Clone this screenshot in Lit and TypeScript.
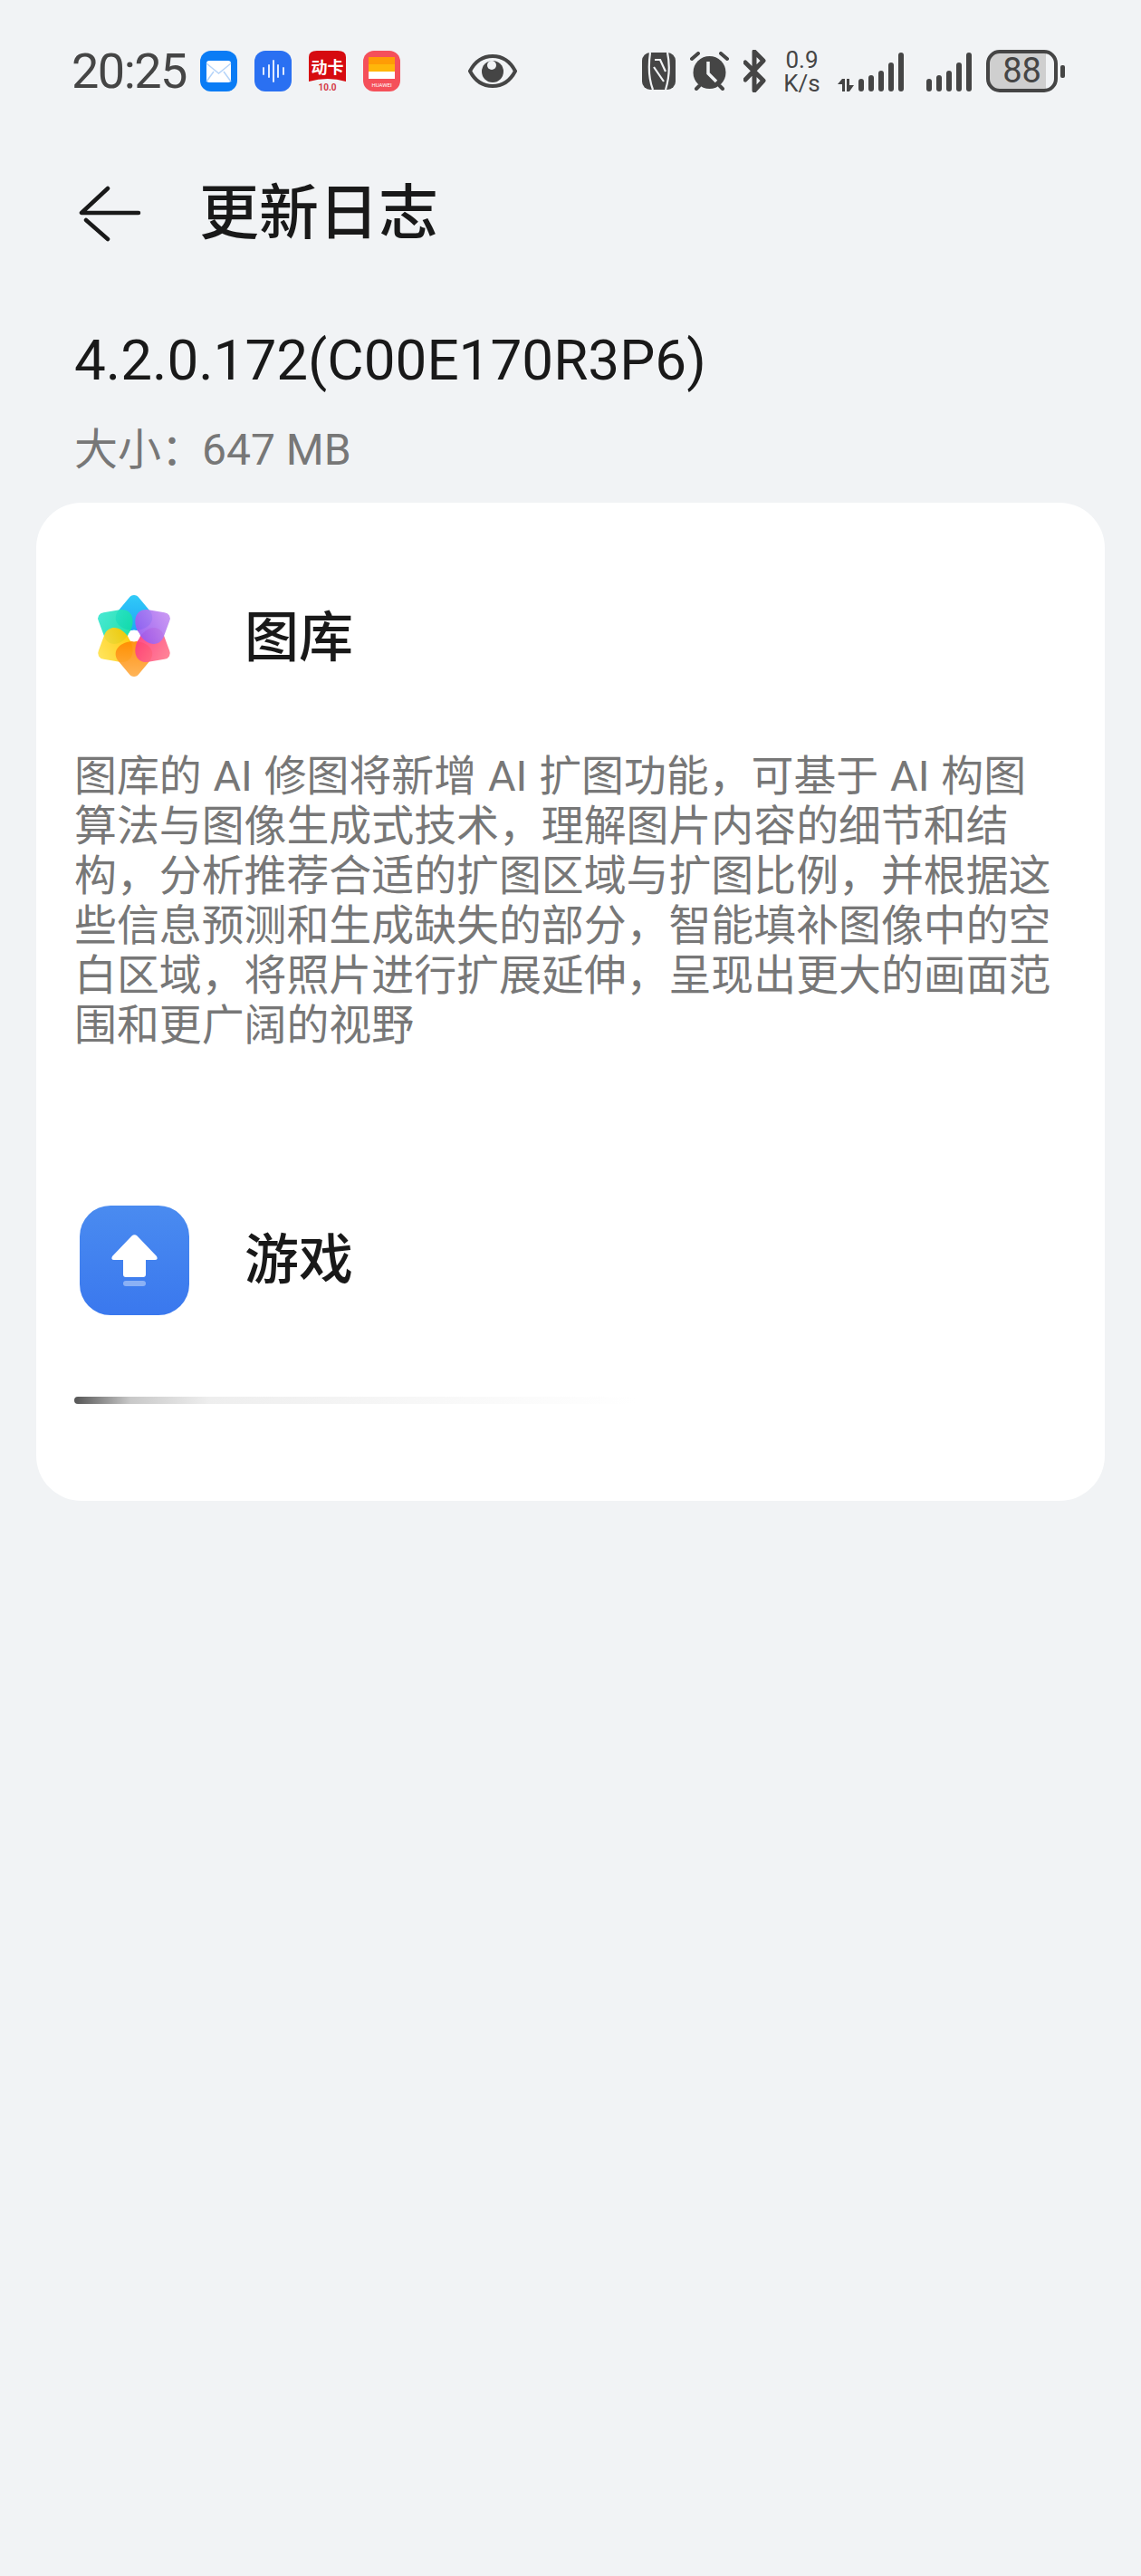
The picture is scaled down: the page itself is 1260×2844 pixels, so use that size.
import { LitElement, css, html, svg } from "lit";
import { customElement } from "lit/decorators.js";

const petal =
  "M0-45Q3.500-45 5.500-42L18-27C25-16 15-6 0-6C-15-6-25-16-18-27L-5.500-42Q-3.500-45 0-45Z";

// drawn so that each petal lies over the one clockwise from it
const petals = [
  { angle: 0, id: "p-blue", a: "#1fc6f7", b: "#0a9ff5" },
  { angle: 300, id: "p-teal", a: "#38e6cf", b: "#12dfa4" },
  { angle: 240, id: "p-yellow", a: "#ffe24f", b: "#ffc800" },
  { angle: 180, id: "p-orange", a: "#ffae4a", b: "#ff8a00" },
  { angle: 120, id: "p-pink", a: "#ff7a8e", b: "#ff3f80" },
  { angle: 60, id: "p-purple", a: "#c590f2", b: "#9a5cf0" },
];

const signal = [14, 18, 23, 32, 43];

@customElement("app-root")
export class AppRoot extends LitElement {
  static styles = css`
    :host {
      display: block;
      height: 2844px;
      background: #f1f3f5;
      font-family: "Roboto", "Noto Sans CJK SC", sans-serif;
      color: #191919;
      overflow: hidden;
    }

    svg {
      display: block;
      flex: none;
    }

    .status {
      display: flex;
      align-items: center;
      height: 45px;
      padding: 56px 84px 0 79px;
      color: #454545;
    }

    .time {
      font-size: 54px;
      letter-spacing: -1.500px;
      line-height: 45px;
      width: 142px;
      flex: none;
    }

    .notif {
      width: 41px;
      height: 45px;
      margin-right: 19px;
      flex: none;
    }

    .eye {
      margin-left: 56px;
    }

    .right {
      margin-left: auto;
      display: flex;
      align-items: center;
    }

    .gap-16 {
      margin-left: 16px;
    }

    .speed {
      font-size: 26px;
      line-height: 26px;
      text-align: center;
      width: 41px;
      margin: 0 19px;
    }

    .signal-2 {
      margin-left: 24px;
    }

    .battery {
      width: 79px;
      height: 47px;
      box-sizing: border-box;
      border: 4px solid #454545;
      border-radius: 15px;
      margin-left: 16px;
      background: linear-gradient(90deg, #cfcfcf 88%, transparent 88%);
      font-size: 38px;
      line-height: 39px;
      text-align: center;
    }

    .nub {
      width: 5px;
      height: 14px;
      margin-left: 3px;
      border-radius: 2px;
      background: #454545;
    }

    .toolbar {
      display: flex;
      align-items: center;
      height: 100px;
      margin-top: 85px;
      padding-left: 87px;
      gap: 64px;
    }

    .title {
      font-size: 66px;
      font-weight: 500;
      line-height: 100px;
    }

    .head {
      padding: 0 82px;
      margin-top: 72px;
    }

    .version {
      font-size: 62px;
      line-height: 80px;
    }

    .size {
      font-size: 48px;
      line-height: 60px;
      margin-top: 29px;
      color: #777;
    }

    .colon {
      margin-right: -3px;
    }

    .card {
      margin: 28px 40px 0;
      height: 1102px;
      box-sizing: border-box;
      padding: 0 42px;
      background: #fff;
      border-radius: 50px;
    }

    .app {
      display: flex;
      align-items: center;
    }

    .app-name {
      font-size: 60px;
      font-weight: 500;
      line-height: 80px;
    }

    .gallery {
      padding: 93px 0 0 12px;
      gap: 68px;
    }

    .gallery .app-name {
      padding-top: 5px;
    }

    .desc {
      margin-top: 73px;
      font-size: 46.900px;
      line-height: 55px;
      word-spacing: 1.200px;
      color: #777;
      width: 1090px;
    }

    .game {
      margin-top: 172px;
      padding-left: 6px;
      gap: 61px;
    }

    .game-icon {
      width: 121px;
      height: 121px;
      border-radius: 34px;
      background: linear-gradient(180deg, #4a8bf0, #3a78ee);
    }

    .loading {
      width: 620px;
      height: 8px;
      margin-top: 90px;
      border-radius: 4px 0 0 4px;
      background: linear-gradient(
        90deg,
        #555 0,
        #c8c8c8 10%,
        #eee 24%,
        #f7f7f7 60%,
        #fff 100%
      );
    }
  `;

  renderNotifications() {
    return html`
      <svg class="notif" viewBox="0 0 41 45">
        <rect width="41" height="45" rx="12" fill="#0a7cf5" />
        <rect x="7" y="11" width="27" height="24" rx="3" fill="#fff" />
        <path
          d="M7 14l13.500 11L34 14M7 34l8-11M34 34l-8-11"
          fill="none"
          stroke="#b5d4f9"
          stroke-width="1.500"
        />
      </svg>
      <svg class="notif" viewBox="0 0 41 45">
        <rect width="41" height="45" rx="12" fill="#2a70f2" />
        <path
          d="M10 19v7M16 16v13M21 11v23M26 16v13M32 19v7"
          stroke="#dfeafe"
          stroke-width="2"
          stroke-linecap="round"
        />
      </svg>
      <svg class="notif" viewBox="0 0 41 45">
        <path d="M0 7q0-7 9-7h23q9 0 9 7v27q-20-6-41 0z" fill="#d60b10" />
        <text x="20.500" y="25" text-anchor="middle" font-size="18" font-weight="700" fill="#fff">动卡</text>
        <text x="20.500" y="44" text-anchor="middle" font-size="10" font-weight="700" fill="#d43a45">10.0</text>
      </svg>
      <svg class="notif" viewBox="0 0 41 45">
        <rect width="41" height="45" rx="12" fill="#f5505a" />
        <rect x="6" y="7" width="29" height="8" fill="#ff9c05" />
        <rect x="6" y="15" width="29" height="8" fill="#ffb60a" />
        <rect x="6" y="23" width="29" height="8" fill="#fff" />
        <text x="20.500" y="40" text-anchor="middle" font-size="6" fill="#fff">HUAWEI</text>
      </svg>
    `;
  }

  renderSignal(width: number, withArrows: boolean) {
    return html`<svg class=${withArrows ? "" : "signal-2"} width=${width} height="44" viewBox="0 0 ${width} 44">
      ${withArrows
        ? svg`<path d="M0 36l5-6h3v14H5v-8zM10 30h3v7h5l-5 7h-3z" fill="#454545" />`
        : ""}
      ${signal.map(
        (h, i) =>
          svg`<rect x=${width - 50 + i * 11} y=${44 - h} width="6" height=${h} rx="3" fill="#454545" />`,
      )}
    </svg>`;
  }

  render() {
    return html`
      <div class="status">
        <span class="time">20:25</span>
        ${this.renderNotifications()}
        <svg class="eye" width="54" height="39" viewBox="0 0 54 39">
          <path
            d="M2 19.500C8 8 17 3 27 3s19 5 25 16.500C46 31 37 36 27 36S8 31 2 19.500Z"
            fill="none"
            stroke="#454545"
            stroke-width="4"
          />
          <circle cx="27" cy="20" r="12" fill="#454545" />
          <circle cx="26" cy="13" r="5" fill="#f1f3f5" />
        </svg>
        <div class="right">
          <svg width="37" height="41" viewBox="0 0 37 41">
            <rect width="37" height="41" rx="9" fill="#454545" />
            <g fill="none" stroke="#f1f3f5" stroke-width="2.200">
              <path d="M9 0C7 14 7 28 12 41M28 0C31 14 30 28 26 41" />
              <path d="M14 8h6l6 13M13 16l11 16" />
            </g>
          </svg>
          <svg class="gap-16" width="43" height="43" viewBox="0 0 43 43">
            <circle cx="21.500" cy="23" r="18" fill="#454545" />
            <path d="M20 11v13l9 9" fill="none" stroke="#f1f3f5" stroke-width="3.500" />
            <path
              d="M2 8l7-6M41 8l-7-6M7 41l3-3M36 41l-3-3"
              stroke="#454545"
              stroke-width="4"
              stroke-linecap="round"
            />
          </svg>
          <svg class="gap-16" width="25" height="47" viewBox="0 0 25 47">
            <path
              d="M2 14l20 20-10 11V2l10 10L2 33"
              fill="none"
              stroke="#454545"
              stroke-width="5"
              stroke-linejoin="round"
              stroke-linecap="round"
            />
          </svg>
          <div class="speed">0.9<br />K/s</div>
          ${this.renderSignal(73, true)}
          ${this.renderSignal(51, false)}
          <div class="battery">88</div>
          <div class="nub"></div>
        </div>
      </div>

      <div class="toolbar">
        <svg width="69" height="62" viewBox="0 0 69 62">
          <path
            d="M32 3L3 30h63M8 38l24 21"
            fill="none"
            stroke="#191919"
            stroke-width="4.500"
            stroke-linecap="round"
            stroke-linejoin="round"
          />
        </svg>
        <span class="title">更新日志</span>
      </div>

      <div class="head">
        <div class="version">4.2.0.172(C00E170R3P6)</div>
        <div class="size"><span class="colon">大小：</span>647 MB</div>
      </div>

      <div class="card">
        <div class="app gallery">
          <svg width="108" height="108" viewBox="-54 -54 108 108">
            <defs>
              ${petals.map(
                (p) => svg`<linearGradient id=${p.id} x1="0" y1="0" x2="0" y2="1">
                  <stop offset="0" stop-color=${p.a} />
                  <stop offset="1" stop-color=${p.b} />
                </linearGradient>`,
              )}
            </defs>
            ${petals.map(
              (p) =>
                svg`<path d=${petal} fill="url(#${p.id})" opacity="0.92" transform="rotate(${p.angle})" />`,
            )}
            <circle r="6.500" fill="#fff" />
          </svg>
          <span class="app-name">图库</span>
        </div>
        <div class="desc">
          图库的 AI 修图将新增 AI 扩图功能，可基于 AI 构图算法与图像生成式技术，理解图片内容的细节和结构，分析推荐合适的扩图区域与扩图比例，并根据这些信息预测和生成缺失的部分，智能填补图像中的空白区域，将照片进行扩展延伸，呈现出更大的画面范围和更广阔的视野
        </div>
        <div class="app game">
          <div class="game-icon">
            <svg width="121" height="121" viewBox="0 0 121 121">
              <path
                d="M57.500 33.500Q60.500 31 63.500 33.500L85 56Q87 60 83 60H73V76Q73 79 70 79H51Q48 79 48 76V60H38Q34 60 36 56Z"
                fill="#fff"
              />
              <rect x="48" y="83" width="25" height="6" rx="3" fill="#fff" opacity="0.4" />
            </svg>
          </div>
          <span class="app-name">游戏</span>
        </div>
        <div class="loading"></div>
      </div>
    `;
  }
}
